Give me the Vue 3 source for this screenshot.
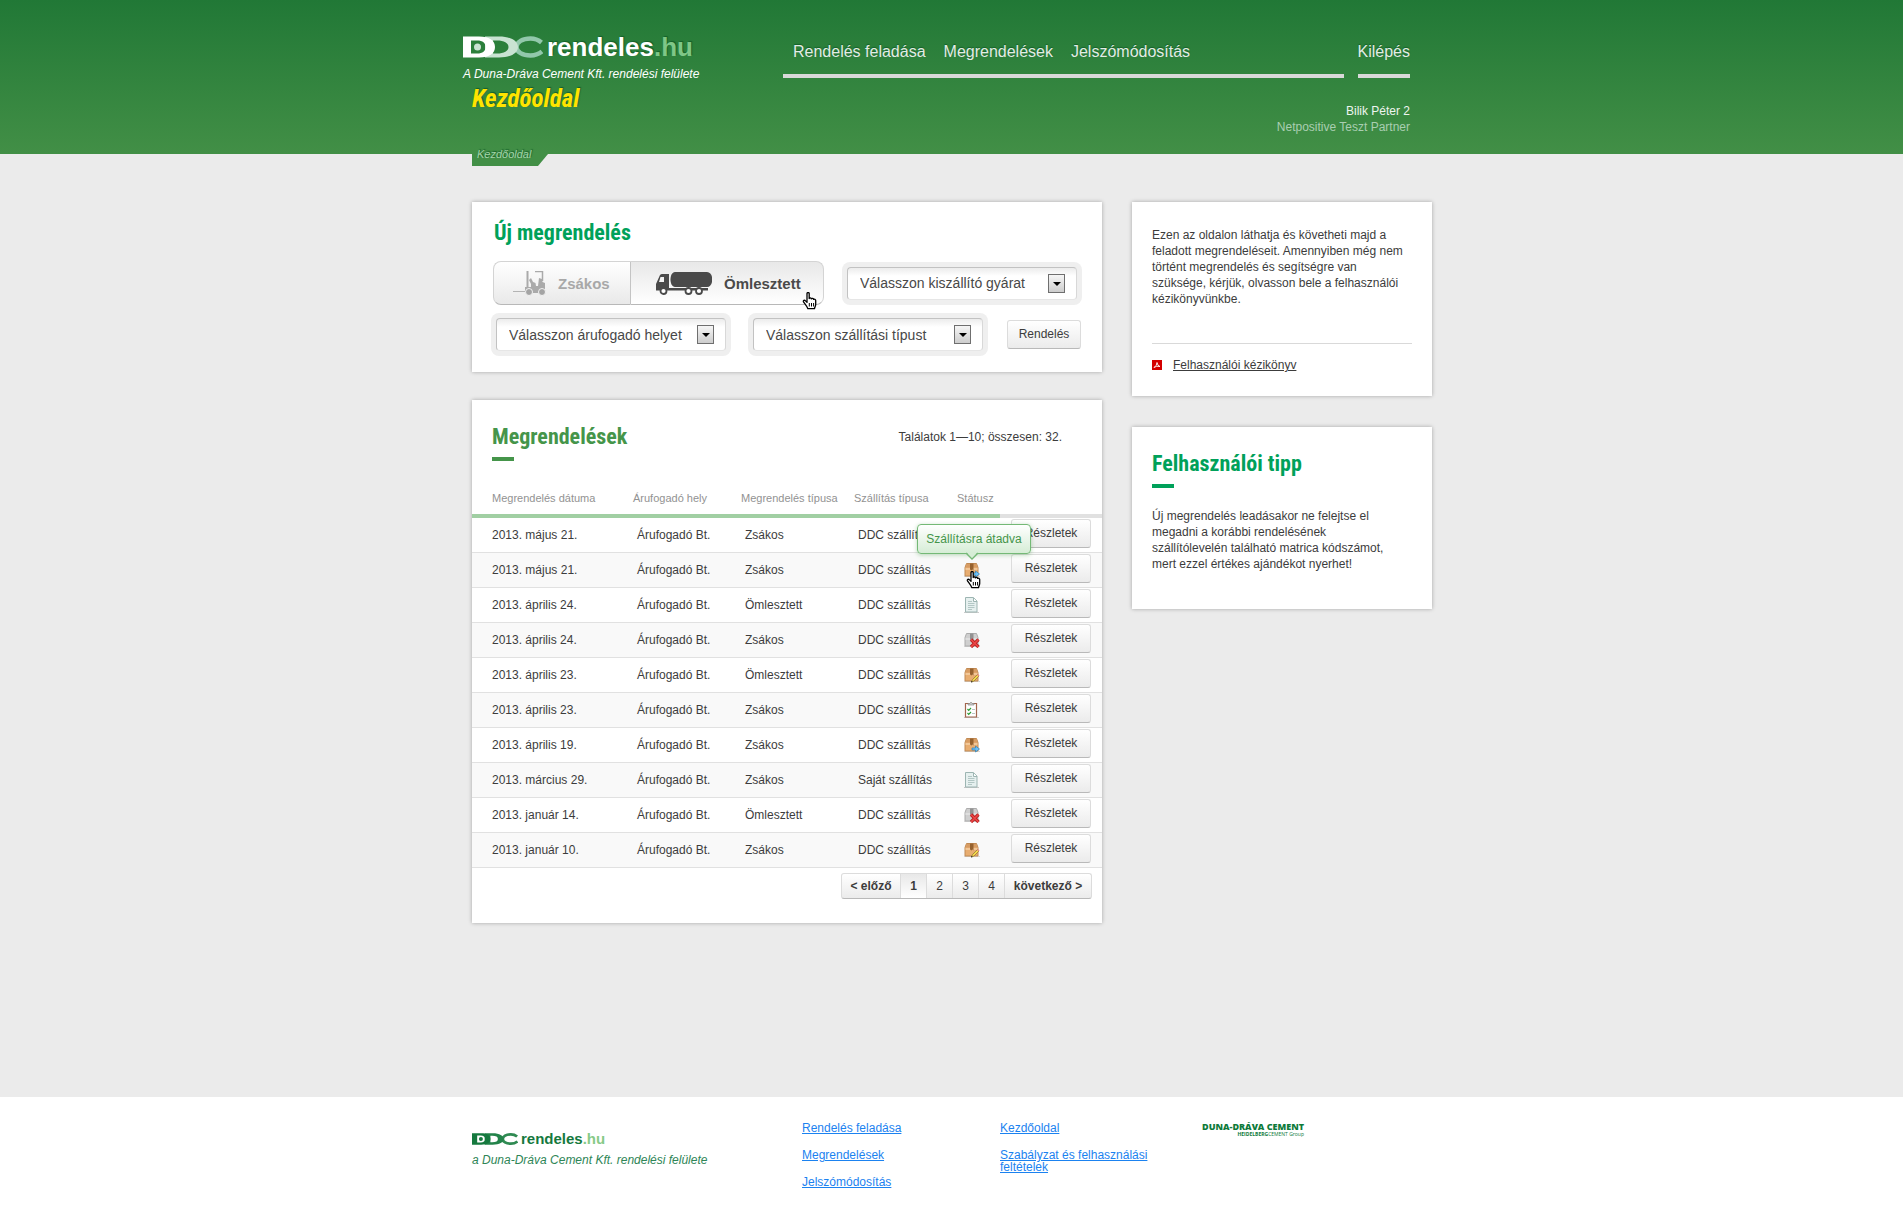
<script setup>
import { ref } from 'vue'

const bulk = ref(true)

const selects = [
  { id: 'plant', text: 'Válasszon kiszállító gyárat' },
  { id: 'place', text: 'Válasszon árufogadó helyet' },
  { id: 'mode', text: 'Válasszon szállítási típust' },
]

const columns = ['Megrendelés dátuma', 'Árufogadó hely', 'Megrendelés típusa', 'Szállítás típusa', 'Státusz']

const orders = [
  { date: '2013. május 21.', type: 'Zsákos', delivery: 'DDC szállítás', status: 'none' },
  { date: '2013. május 21.', type: 'Zsákos', delivery: 'DDC szállítás', status: 'sent', tip: 'Szállításra átadva' },
  { date: '2013. április 24.', type: 'Ömlesztett', delivery: 'DDC szállítás', status: 'doc' },
  { date: '2013. április 24.', type: 'Zsákos', delivery: 'DDC szállítás', status: 'deleted' },
  { date: '2013. április 23.', type: 'Ömlesztett', delivery: 'DDC szállítás', status: 'edit' },
  { date: '2013. április 23.', type: 'Zsákos', delivery: 'DDC szállítás', status: 'list' },
  { date: '2013. április 19.', type: 'Zsákos', delivery: 'DDC szállítás', status: 'sent' },
  { date: '2013. március 29.', type: 'Zsákos', delivery: 'Saját szállítás', status: 'doc' },
  { date: '2013. január 14.', type: 'Ömlesztett', delivery: 'DDC szállítás', status: 'deleted' },
  { date: '2013. január 10.', type: 'Zsákos', delivery: 'DDC szállítás', status: 'edit' },
]
</script>

<template>
  <div class="page">
    <svg class="defs" width="0" height="0" aria-hidden="true">
      <symbol id="hand" viewBox="0 0 16 18">
        <path d="M5 1.5c0-1.3 2.2-1.3 2.2 0v5c.3-.9 2-.8 2.2.3.5-.7 2-.4 2.2.6.7-.5 2.1-.1 2.1 1.1v4c0 1.500-1 2.200-1.200 4.200H5.900C5.200 14.500 2.500 11.500 1.500 9.800.8 8.400 2.500 7.600 3.500 8.900L5 10.400Z" fill="#fff" stroke="#000" stroke-width="1.300" stroke-linejoin="round" />
        <path d="M7.300 11v3.500M9.500 11v3.500M11.600 11v3.500" stroke="#000" stroke-width="1" fill="none" />
      </symbol>
      <symbol id="box" viewBox="0 0 16 16">
        <path d="M0 14.500h16" stroke="#000" stroke-opacity=".15" />
        <path d="M2.500 1.500h10l1.500 4v8.500H1V5.500Z" fill="#e8ad70" stroke="#c08a54" />
        <path d="M3 2h9l1.500 3.500h-12Z" fill="#d79c63" />
        <path d="M1.500 6h12v2h-12Z" fill="#f2c797" />
        <path d="M6 1.500h3.500v7l-1-1-1 1-1.500-1Z" fill="#96622f" />
      </symbol>
      <symbol id="graybox" viewBox="0 0 16 16">
        <path d="M0 14.500h16" stroke="#000" stroke-opacity=".15" />
        <path d="M2.500 1.500h10l1.500 4v8.500H1V5.500Z" fill="#cfcfcf" stroke="#acacac" />
        <path d="M1.500 6h12v2h-12Z" fill="#dedede" />
        <path d="M6 1.500h3.500v7l-1-1-1 1-1.500-1Z" fill="#929292" />
      </symbol>
    </svg>

    <header class="top">
      <div class="top-inner">
        <div class="brand">
          <a class="logo" href="#" aria-label="DDC rendeles.hu">
            <svg width="80" height="22" viewBox="0 0 80 22" aria-hidden="true">
              <path d="M78.500 6.500C75 3.500 71 2.500 67.500 2.500 59.500 2.500 53.500 6 53.500 11s6 8.500 14 8.500c4 0 8-1 11.500-4" fill="none" stroke="#92c8ab" stroke-width="4.500" />
              <path fill-rule="evenodd" d="M22 .5h14C48 .5 55 5 55 11s-7 10.500-19 10.500H22ZM30 4.500v13h4C41 17.500 45.500 15 45.500 11S41 4.500 34 4.500Z" fill="#c9e3d2" />
              <path fill-rule="evenodd" d="M0 .5h16C27 .5 32 5 32 11s-5 10.500-16 10.500H0ZM8 4.500v13h6c6 0 8.500-2.500 8.500-6.500S20 4.500 14 4.500Z" fill="#fff" />
              <circle cx="14.500" cy="11" r="3.500" fill="#c9e3d2" />
            </svg>
            <span class="word">rendeles<span class="tld">.hu</span></span>
          </a>
          <p class="tagline">A Duna-Dráva Cement Kft. rendelési felülete</p>
          <h1>Kezdőoldal</h1>
        </div>
        <div class="menu">
          <nav>
            <div class="links">
              <a href="#">Rendelés feladása</a>
              <a href="#">Megrendelések</a>
              <a href="#">Jelszómódosítás</a>
            </div>
            <a class="exit" href="#">Kilépés</a>
          </nav>
          <p class="user">Bilik Péter 2<br /><span>Netpositive Teszt Partner</span></p>
        </div>
        <div class="crumb"><span>Kezdőoldal</span></div>
      </div>
    </header>

    <main>
      <div class="left">
        <section class="card new">
          <h2>Új megrendelés</h2>
          <form class="form" @submit.prevent>
            <div class="row">
              <div class="toggle">
                <button type="button" class="bag" :aria-pressed="!bulk" @click="bulk = false">
                  <svg width="34" height="25" viewBox="0 0 34 25" aria-hidden="true">
                    <path d="M0 20.500h12" stroke="#b4b4b4" />
                    <path d="M14.500 0v19" stroke="#aaa" stroke-width="2" />
                    <path d="M22 .5h8M29.500 0v10" stroke="#aaa" fill="none" stroke-width="1.500" />
                    <path d="M16 9l2-2 2 4 2.500 1 .5 3h2l1-8 3 1 .5 3 2.500 1v10H12v-6h6v-3Z" fill="#aaa" />
                    <circle cx="16" cy="21" r="3.500" fill="#a4a4a4" stroke="#f2f2f2" />
                    <circle cx="29" cy="21" r="3.500" fill="#a4a4a4" stroke="#f2f2f2" />
                  </svg>
                  Zsákos
                </button>
                <button type="button" class="bulk" :aria-pressed="bulk" @click="bulk = true">
                  <svg width="56" height="23" viewBox="0 0 56 23" aria-hidden="true">
                    <path d="M19 0h32c7 0 7 15 0 15H19c-6 0-6-15 0-15Z" fill="#4a4a4a" />
                    <path fill-rule="evenodd" d="M4 3q1-1 2-1h7v14h39v2.500H0V12ZM4.500 5 3 10h5V5Z" fill="#4a4a4a" />
                    <circle cx="7.500" cy="19" r="3" fill="#fff" stroke="#4a4a4a" stroke-width="1.800" />
                    <circle cx="32.500" cy="19" r="3" fill="#fff" stroke="#4a4a4a" stroke-width="1.800" />
                    <circle cx="43" cy="19" r="3" fill="#fff" stroke="#4a4a4a" stroke-width="1.800" />
                  </svg>
                  Ömlesztett
                  <svg class="pointer" width="16" height="18"><use href="#hand" /></svg>
                </button>
              </div>
              <label class="pick"><select :aria-label="selects[0].text"><option>{{ selects[0].text }}</option></select><span class="arrow"></span></label>
            </div>
            <div class="row second">
              <label v-for="s in selects.slice(1)" :key="s.id" class="pick"><select :aria-label="s.text"><option>{{ s.text }}</option></select><span class="arrow"></span></label>
              <button type="submit" class="btn order">Rendelés</button>
            </div>
          </form>
        </section>

        <section class="card list">
          <div class="list-head">
            <h2 class="barred">Megrendelések</h2>
            <p>Találatok 1—10; összesen: 32.</p>
          </div>
          <table>
            <colgroup>
              <col class="c-date" /><col class="c-place" /><col class="c-type" /><col class="c-mode" /><col class="c-status" /><col />
            </colgroup>
            <thead>
              <tr>
                <th v-for="c in columns" :key="c" scope="col">{{ c }}</th>
                <td></td>
              </tr>
            </thead>
            <tbody>
              <tr v-for="(o, i) in orders" :key="i">
                <td>{{ o.date }}</td>
                <td>Árufogadó Bt.</td>
                <td>{{ o.type }}</td>
                <td>{{ o.delivery }}</td>
                <td>
                  <span v-if="o.status !== 'none'" class="status">
                    <svg width="16" height="16" viewBox="0 0 16 16" aria-hidden="true">
                      <template v-if="o.status === 'sent'">
                        <use href="#box" />
                        <path d="M8 11h3.500V9l4 3-4 3v-2H8Z" fill="#6cc0f5" stroke="#2f7fb8" stroke-width=".7" />
                      </template>
                      <template v-else-if="o.status === 'edit'">
                        <use href="#box" />
                        <path d="M7.500 15 8.500 12.500 13.500 7.500l1.500 1.500L10 14Z" fill="#f6da4b" stroke="#8d7430" stroke-width=".7" />
                        <path d="m13 8 1-1 1.500 1.500-1 1Z" fill="#e88a86" />
                        <path d="m7 15.500.5-1.700 1.200 1.200Z" fill="#222" />
                      </template>
                      <template v-else-if="o.status === 'deleted'">
                        <use href="#graybox" />
                        <path d="m7 7.500 7.500 7.500M14.500 7.500 7 15" stroke="#b91f1f" stroke-width="3.200" />
                        <path d="m7 7.500 7.500 7.500M14.500 7.500 7 15" stroke="#ec4848" stroke-width="1.600" />
                      </template>
                      <template v-else-if="o.status === 'doc'">
                        <path d="M0 15.500h15" stroke="#000" stroke-opacity=".2" />
                        <path d="M1.500.5h8l3.500 3.500v11H1.500Z" fill="#e6f0ef" stroke="#9db5b2" />
                        <path d="M9.500 1v3.500H13" fill="#fff" stroke="#9db5b2" />
                        <path d="M4 4.500h4M4 6.500h6.500M4 8.500h6.500M4 10.500h6.500M4 12.500h4" stroke="#b3c7c5" />
                      </template>
                      <template v-else>
                        <path d="M0 15.500h15" stroke="#000" stroke-opacity=".2" />
                        <path d="M1.500 1.500h11v13.500h-11Z" fill="#fff" stroke="#a2654c" stroke-width="1.200" />
                        <path d="M4 3V1.500h1.500q1.500-2.500 3 0H10V3Z" fill="#ccc" stroke="#888" stroke-width=".7" />
                        <path d="m3.500 7 1.200 1.300L7 6M3.500 11l1.200 1.300L7 10" fill="none" stroke="#2c9b35" stroke-width="1.200" />
                        <path d="M8 7.500h3M8 11.500h3" stroke="#b9c6c6" />
                      </template>
                    </svg>
                    <template v-if="o.tip">
                      <span class="tip" role="tooltip">{{ o.tip }}<svg width="12" height="8" viewBox="0 0 12 8" aria-hidden="true"><path d="M0 0h12L6 6Z" fill="#d6edd6" /><path d="M0 1 6 7l6-6" fill="none" stroke="#74b976" stroke-width="1.300" /></svg></span>
                      <svg class="pointer" width="16" height="18"><use href="#hand" /></svg>
                    </template>
                  </span>
                </td>
                <td><button type="button" class="btn">Részletek</button></td>
              </tr>
            </tbody>
          </table>
          <nav class="pager" aria-label="Lapozó">
            <a class="step" href="#">&lt; előző</a>
            <a class="current" href="#" aria-current="page">1</a>
            <a href="#">2</a>
            <a href="#">3</a>
            <a href="#">4</a>
            <a class="step" href="#">következő &gt;</a>
          </nav>
        </section>
      </div>

      <aside>
        <section class="card help">
          <p>Ezen az oldalon láthatja és követheti majd a feladott megrendeléseit. Amennyiben még nem történt megrendelés és segítségre van szüksége, kérjük, olvasson bele a felhasználói kézikönyvünkbe.</p>
          <div class="manual">
            <svg width="10" height="10" viewBox="0 0 10 10" aria-hidden="true"><path d="M0 0h10v10H0Z" fill="#d40000" /><path d="M2 7.500Q5 5.500 5 2.500 5.500 6 8 6.500 4.500 5.500 2 7.500" fill="none" stroke="#fff" stroke-width=".9" /></svg>
            <a href="#">Felhasználói kézikönyv</a>
          </div>
        </section>
        <section class="card hint">
          <h2 class="barred">Felhasználói tipp</h2>
          <p>Új megrendelés leadásakor ne felejtse el megadni a korábbi rendelésének szállítólevelén található matrica kódszámot, mert ezzel értékes ajándékot nyerhet!</p>
        </section>
      </aside>
    </main>

    <footer>
      <div class="foot">
        <div class="foot-brand">
          <a class="logo" href="#" aria-label="DDC rendeles.hu">
            <svg width="46" height="12" viewBox="0 0 80 22" preserveAspectRatio="none" aria-hidden="true">
              <path d="M78.500 6.500C75 3.500 71 2.500 67.500 2.500 59.500 2.500 53.500 6 53.500 11s6 8.500 14 8.500c4 0 8-1 11.500-4" fill="none" stroke="#2f8a52" stroke-width="5" />
              <path fill-rule="evenodd" d="M22 .5h14C48 .5 55 5 55 11s-7 10.500-19 10.500H22ZM32 5v12h3C42 17 45 15 45 11S42 5 35 5Z" fill="#23834a" />
              <path fill-rule="evenodd" d="M0 .5h16C27 .5 32 5 32 11s-5 10.500-16 10.500H0ZM9 4.500v13h6c5 0 8-2.500 8-6.500s-3-6.500-8-6.500Z" fill="#15793e" />
              <circle cx="15.500" cy="11" r="3.500" fill="#15793e" />
            </svg>
            <span class="word">rendeles<span class="tld">.hu</span></span>
          </a>
          <p>a Duna-Dráva Cement Kft. rendelési felülete</p>
        </div>
        <ul>
          <li><a href="#">Rendelés feladása</a></li>
          <li><a href="#">Megrendelések</a></li>
          <li><a href="#">Jelszómódosítás</a></li>
        </ul>
        <ul>
          <li><a href="#">Kezdőoldal</a></li>
          <li><a href="#">Szabályzat és felhasználási feltételek</a></li>
        </ul>
        <div class="company">
          <strong>DUNA-DRÁVA CEMENT</strong>
          <small><b>HEIDELBERG</b>CEMENT Group</small>
        </div>
      </div>
    </footer>
  </div>
</template>

<style>
body {
  background: #fff;
}
</style>

<style scoped>
.page {
  display: flex;
  flex-direction: column;
  min-height: 100vh;
  background: #ebebeb;
  color: #3c3c3c;
  font: 12px/16px "Liberation Sans", Arial, sans-serif;
}
.page * {
  box-sizing: border-box;
}
.defs {
  position: absolute;
}
p, h1, h2, ul {
  margin: 0;
  padding: 0;
}
button, select {
  font-family: inherit;
  color: inherit;
  margin: 0;
}
svg {
  flex: none;
}

/* header */
.top {
  padding-left: 1px;
  background: linear-gradient(#217836, #428f46);
}
.top-inner {
  position: relative;
  display: flex;
  justify-content: space-between;
  width: 978px;
  height: 154px;
  margin: 0 auto;
  padding: 35px 31px 0 0;
}
.logo {
  display: flex;
  align-items: center;
  text-decoration: none;
}
.top .logo {
  gap: 4px;
  height: 24px;
  color: #fff;
}
.word {
  font-weight: bold;
}
.top .word {
  font-size: 26px;
  line-height: 26px;
  text-shadow: 1px -1px 1px #14602a;
}
.top .tld {
  color: #7fc787;
}
.tagline {
  margin-top: 7px;
  color: #fff;
  font-style: italic;
}
h1, h2 {
  font-family: "Roboto Condensed", Roboto, "Liberation Sans", sans-serif;
  font-weight: bold;
}
h1 {
  margin-top: 3px;
  padding-left: 9px;
  color: #ffe400;
  font-size: 25px;
  line-height: 28px;
  font-style: italic;
  text-shadow: 1px -1px 1px #14602a;
}
.menu {
  width: 627px;
}
.menu nav {
  display: flex;
  gap: 14px;
  font-size: 16px;
  line-height: 20px;
}
.menu a {
  color: #e3ece5;
  text-decoration: none;
  text-shadow: 0 -1px 1px #14602a;
}
.links {
  flex: 1;
  display: flex;
  gap: 18px;
  padding-left: 10px;
}
.links, .exit {
  padding-top: 7px;
  padding-bottom: 12px;
  border-bottom: 4px solid #d9d9d9;
}
.user {
  margin-top: 25px;
  color: #eef5ef;
  text-align: right;
}
.user span {
  color: #a9ceb1;
}
.crumb {
  position: absolute;
  left: 9px;
  bottom: -12px;
  width: 76px;
  height: 22px;
  padding: 3px 5px 0;
  background: linear-gradient(transparent 10px, #428f46 10px);
  clip-path: polygon(0 0, 100% 0, 100% 10px, 66px 100%, 0 100%);
  color: #a3d3a8;
  font-size: 11px;
  line-height: 14px;
  font-style: italic;
  text-shadow: 1px -1px 1px #14602a;
}

/* content */
main {
  flex: 1;
  display: grid;
  grid-template-columns: 630px 300px;
  justify-content: center;
  align-items: start;
  gap: 30px;
  padding: 48px 0 60px 1px;
}
.left, aside {
  display: grid;
  gap: 28px;
}
aside {
  gap: 31px;
}
.card {
  background: #fff;
  box-shadow: 0 0 4px rgba(0, 0, 0, .3);
}
h2 {
  color: #00a15a;
  font-size: 22px;
  line-height: 28px;
}
.barred::after {
  content: "";
  display: block;
  width: 22px;
  height: 4px;
  margin-top: 6px;
  background: currentColor;
}
.new {
  padding: 17px 19px 16px;
}
.new h2 {
  padding-left: 3px;
}
.form {
  display: grid;
  gap: 8px;
  margin-top: 14px;
}
.row {
  display: flex;
  align-items: center;
  gap: 18px;
  padding-left: 2px;
}
.second {
  gap: 17px;
  padding-left: 0;
}
.toggle {
  display: flex;
  width: 331px;
  height: 44px;
}
.toggle button {
  position: relative;
  display: flex;
  align-items: center;
  border: 1px solid #d4d4d4;
  border-bottom-color: #b8b8b8;
  font-size: 15px;
  font-weight: bold;
}
.toggle .bag {
  gap: 11px;
  width: 138px;
  padding: 0 0 0 19px;
  border-radius: 8px 0 0 8px;
  border-right-color: #c4c4c4;
  background: linear-gradient(#fff, #e9e9e9);
  color: #a8a8a8;
}
.toggle .bulk {
  flex: 1;
  gap: 12px;
  padding: 0 0 0 25px;
  border-left: 0;
  border-radius: 0 8px 8px 0;
  background: linear-gradient(#e8e8e8, #fff);
  color: #4a4a4a;
}
.pointer {
  position: absolute;
}
.bulk .pointer {
  right: 5px;
  bottom: -6px;
}
.pick {
  position: relative;
  width: 240px;
  height: 43px;
  padding: 5px;
  border-radius: 8px;
  background: #efefef;
}
.pick select {
  display: block;
  width: 100%;
  height: 33px;
  padding: 0 36px 0 12px;
  border: 1px solid #c2c2c2;
  border-right-color: #d8d8d8;
  border-bottom-color: #e6e6e6;
  border-radius: 4px;
  background: linear-gradient(#ececec, #fff 8px);
  appearance: none;
  color: #484848;
  font-size: 14px;
}
.arrow {
  position: absolute;
  top: 12px;
  right: 17px;
  width: 17px;
  height: 19px;
  border: 1px solid #6f6f6f;
  background: linear-gradient(#f6f6f6, #cdcdcd);
  pointer-events: none;
}
.arrow::after {
  content: "";
  position: absolute;
  top: 7px;
  left: 4px;
  border: 4px solid transparent;
  border-top-color: #000;
  border-bottom: 0;
}
.btn {
  height: 29px;
  padding: 0 0 1px;
  border: 1px solid #dcdcdc;
  border-bottom-color: #b9b9b9;
  border-radius: 3px;
  background: linear-gradient(#fff, #ebebeb);
  font-size: 12px;
}
.order {
  width: 74px;
  margin-left: 2px;
}

/* order table */
.list {
  padding: 23px 0 24px;
}
.list h2 {
  color: #45954a;
}
.list-head {
  display: flex;
  justify-content: space-between;
  padding: 0 40px 0 20px;
}
.list-head p {
  margin-top: 6px;
}
table {
  width: 100%;
  border-collapse: separate;
  border-spacing: 0;
  table-layout: fixed;
}
.c-date { width: 161px; }
.c-place { width: 108px; }
.c-type { width: 113px; }
.c-mode { width: 103px; }
.c-status { width: 43px; }
th, td {
  padding: 0;
  text-align: left;
  white-space: nowrap;
}
thead th, thead td {
  padding: 30px 0 9px;
  border-bottom: 4px solid #a1cfa3;
  color: #929292;
  font-size: 11px;
  font-weight: normal;
  line-height: 14px;
}
thead td {
  border-color: #e1e1e1;
}
tbody tr:nth-child(even) {
  background: #f9f9f9;
}
tbody td {
  height: 35px;
  padding-left: 4px;
  border-bottom: 1px solid #e1e1e1;
}
tbody td:last-child {
  padding: 1px 0 0 11px;
  vertical-align: top;
}
th:first-child, tbody td:first-child {
  padding-left: 20px;
}
td .btn {
  display: block;
  width: 80px;
}
.status {
  position: relative;
  display: block;
  width: 16px;
  margin-left: 3px;
}
.status svg {
  display: block;
}
.status .pointer {
  top: 9px;
  left: 2px;
}
.tip {
  position: absolute;
  bottom: 24px;
  left: -47px;
  width: 114px;
  height: 30px;
  border: 1px solid #74b976;
  border-radius: 4px;
  background: linear-gradient(#fff, #d6edd6);
  box-shadow: 0 1px 4px rgba(80, 160, 80, .4);
  color: #45954a;
  line-height: 28px;
  text-align: center;
}
.tip svg {
  position: absolute;
  top: 27px;
  left: 48px;
}
.pager {
  display: flex;
  width: max-content;
  margin: 5px 10px 0 auto;
  border: 1px solid #dcdcdc;
  border-bottom-color: #b9b9b9;
  border-radius: 3px;
  background: linear-gradient(#fff, #ebebeb);
}
.pager a {
  width: 26px;
  height: 24px;
  border-left: 1px solid #dcdcdc;
  color: inherit;
  line-height: 24px;
  text-align: center;
  text-decoration: none;
}
.pager .step {
  width: 87px;
  font-weight: bold;
}
.pager .step:first-child {
  width: 58px;
  border-left: 0;
}
.pager .current {
  background: linear-gradient(#e8e8e8, #fff);
  font-weight: bold;
}

/* sidebar */
.help {
  padding: 25px 20px 23px;
}
.help p {
  min-height: 80px;
}
.manual {
  display: flex;
  align-items: center;
  gap: 11px;
  margin-top: 36px;
  padding-top: 13px;
  border-top: 1px solid #d9d9d9;
}
.manual a {
  color: inherit;
}
.hint {
  padding: 23px 20px 37px;
}
.hint p {
  margin-top: 20px;
  padding-right: 20px;
}

/* footer */
footer {
  min-height: 130px;
  padding-left: 1px;
  background: #fff;
}
.foot {
  display: grid;
  grid-template-columns: 330px 198px 200px 232px;
  justify-content: center;
  padding-top: 25px;
}
.foot-brand {
  padding-top: 9px;
  color: #2e8556;
  font-style: italic;
}
.foot .logo {
  gap: 3px;
  height: 16px;
  color: #15793e;
  font-size: 15px;
  font-style: normal;
}
.foot .tld {
  color: #86ca87;
}
.foot-brand p {
  margin-top: 5px;
}
ul {
  display: grid;
  gap: 15px;
  align-content: start;
  width: 160px;
  list-style: none;
  line-height: 12px;
}
li a {
  color: #1b82f0;
}
.company {
  display: flex;
  flex-direction: column;
  align-items: flex-end;
  width: 104px;
  color: #0d7a3a;
  font-family: "Open Sans", "Noto Sans", sans-serif;
  white-space: nowrap;
}
.company strong {
  font-size: 9px;
  font-weight: 800;
  line-height: 10px;
}
.company small {
  font-size: 5px;
  line-height: 5px;
}
</style>
